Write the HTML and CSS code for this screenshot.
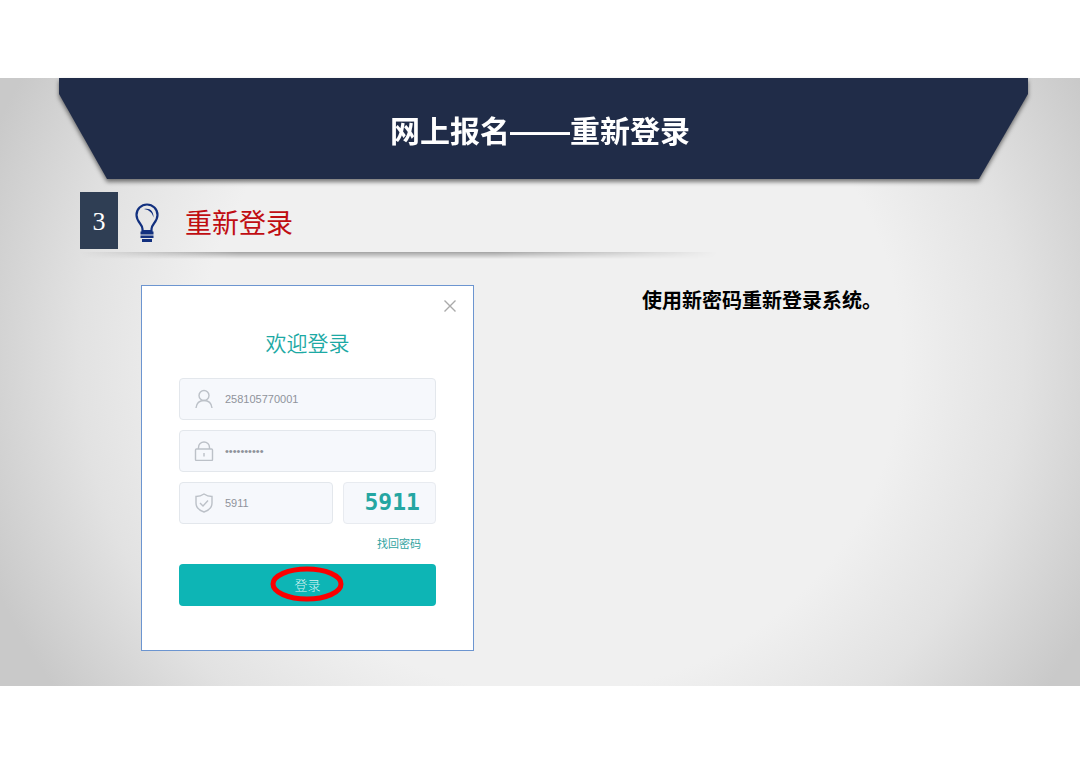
FILE: index.html
```html
<!DOCTYPE html>
<html lang="zh-CN">
<head>
  <meta charset="UTF-8" />
  <title>网上报名——重新登录</title>
  <meta name="viewport" content="width=device-width, initial-scale=1.0" />
  <link rel="stylesheet" href="styles.css">
</head>
<body>

  <main class="slide">
    <header class="banner-wrapper">
      <div class="banner">
        <h1>网上报名——重新登录</h1>
      </div>
    </header>

    <div class="section-header">
      <span class="step">3</span>
      <svg class="bulb" viewBox="0 0 24 40" aria-hidden="true">
        <path d="M7.500 28V26C7.500 21 1.500 19 1.500 12A10.500 10.500 0 0 1 22.500 12C22.500 19 16.500 21 16.500 26V28Z" fill="none" stroke="#12307f" stroke-width="2.200" />
        <path d="M9 6C14.500 4.500 19 8 18.500 14.500C17.500 10 14.500 7 9 6Z" fill="#12307f" />
        <path d="M5.500 28.500H18.500V31.500H5.500ZM5.500 32.500H18.500V35H5.500ZM7 36H17V39H7Z" fill="#12307f" />
      </svg>
      <h2>重新登录</h2>
    </div>
    <div class="divider"></div>

    <div class="content">
      <form class="login-box">
        <button type="button" class="close" aria-label="关闭">
          <svg viewBox="0 0 12 12" aria-hidden="true">
            <path d="M0.500 0.500L11.500 11.500M11.500 0.500L0.500 11.500" />
          </svg>
        </button>
        <h3>欢迎登录</h3>

        <div class="form-group">
          <label for="account" aria-label="账号">
            <svg viewBox="0 0 20 20" aria-hidden="true">
              <circle cx="10" cy="6.500" r="5" />
              <path d="M2 19C2.500 14.500 5.500 11.500 10 11.500S17.500 14.500 18 19" />
            </svg>
          </label>
          <input type="text" id="account" value="258105770001" />
        </div>

        <div class="form-group">
          <label for="password" aria-label="密码">
            <svg viewBox="0 0 20 20" aria-hidden="true">
              <rect x="1.500" y="8" width="17" height="11.500" rx="1" />
              <path d="M4.500 8V6.500A5.500 5.500 0 0 1 15.500 6.500V8M10 12V15.500" />
            </svg>
          </label>
          <input type="password" id="password" value="aaaaaaaaaa" />
        </div>

        <div class="code-row">
          <div class="form-group">
            <label for="code" aria-label="验证码">
              <svg viewBox="0 0 20 20" aria-hidden="true">
                <path d="M10 1C12.500 2.800 15 3.500 18 3.500V10C18 14.500 14.500 17.500 10 19C5.500 17.500 2 14.500 2 10V3.500C5 3.500 7.500 2.800 10 1Z" />
                <path d="M6 10L9 13L14 7.500" />
              </svg>
            </label>
            <input type="text" id="code" value="5911" />
          </div>
          <div class="captcha">5911</div>
        </div>

        <a href="#" class="forgot">找回密码</a>

        <button type="submit" class="submit">
          登录
          <svg class="mark" viewBox="0 0 74 36" aria-hidden="true">
            <ellipse cx="37" cy="18" rx="34" ry="15" />
          </svg>
        </button>
      </form>

      <p class="tip">使用新密码重新登录系统。</p>
    </div>
  </main>

</body>
</html>
```
FILE: styles.css
```css
* {
  box-sizing: border-box;
  margin: 0;
  padding: 0;
}

body {
  padding: 78px 0;
  background: #fff;
  font-family: "Liberation Sans", "Noto Sans CJK SC", sans-serif;
  color: #000;
}

.slide {
  padding-bottom: 35px;
  background: radial-gradient(ellipse 56% 95% at 51% 46%, #f0f0f0 0%, #f0f0f0 58%, #e2e2e2 78%, #c9c9c9 100%);
}

/* Banner */
.banner-wrapper {
  padding: 0 52px 0 59px;
  filter: drop-shadow(0 3px 2px rgba(0, 0, 0, 0.5));
}

.banner {
  height: 101px;
  padding: 32px 7px 0 0;
  background: #202c48;
  clip-path: polygon(0 0, 100% 0, 100% 16px, calc(100% - 49px) 100%, 48px 100%, 0 16px);
}

.banner h1 {
  font-size: 30px;
  line-height: 44px;
  font-weight: bold;
  text-align: center;
  color: #fff;
}

/* Section heading */
.section-header {
  display: flex;
  align-items: center;
  margin-top: 13px;
  padding-left: 80px;
}

.step {
  width: 38px;
  height: 57px;
  background: #2f3e54;
  color: #fff;
  font-family: "Liberation Serif", serif;
  font-size: 26px;
  line-height: 60px;
  text-align: center;
}

.bulb {
  width: 24px;
  height: 40px;
  margin: 4px 26px 0 17px;
}

.section-header h2 {
  padding-top: 6px;
  font-size: 27px;
  line-height: 40px;
  font-weight: normal;
  color: #c00d12;
}

.divider {
  width: 59%;
  height: 7px;
  margin: 3px 0 0 80px;
  background: linear-gradient(rgba(0, 0, 0, 0.32), rgba(0, 0, 0, 0));
  -webkit-mask-image: linear-gradient(to right, transparent, #000 25%, #000 65%, transparent);
  mask-image: linear-gradient(to right, transparent, #000 25%, #000 65%, transparent);
}

.content {
  display: flex;
  align-items: flex-start;
  padding: 26px 80px 0 141px;
}

/* Login box */
.login-box {
  position: relative;
  display: flex;
  flex-direction: column;
  gap: 10px;
  width: 333px;
  padding: 42px 37px 44px;
  background: #fff;
  border: 1px solid #6c95d0;
}

.login-box h3 {
  margin-bottom: 8px;
  font-size: 21px;
  line-height: 32px;
  font-weight: 350;
  text-align: center;
  color: #1ca9a4;
}

.close {
  position: absolute;
  top: 14px;
  right: 17px;
  width: 12px;
  height: 12px;
  border: none;
  background: none;
  cursor: pointer;
}

.close svg {
  display: block;
  stroke: #aaa;
  stroke-width: 1.4;
}

.form-group {
  display: flex;
  align-items: center;
  gap: 11px;
  height: 42px;
  padding: 0 14px;
  background: #f6f8fc;
  border: 1px solid #e3e7ec;
  border-radius: 4px;
}

.form-group svg {
  display: block;
  width: 20px;
  height: 20px;
  fill: none;
  stroke: #bcc1c8;
  stroke-width: 1.4;
}

.form-group input {
  flex: 1;
  min-width: 0;
  border: none;
  outline: none;
  background: none;
  font-family: "Liberation Sans", sans-serif;
  font-size: 11px;
  color: #8f939b;
}

.code-row {
  display: grid;
  grid-template-columns: minmax(0, 5fr) minmax(0, 3fr);
  gap: 10px;
}

.captcha {
  padding-left: 5px;
  background: #f6f8fc;
  border: 1px solid #e8ebf0;
  border-radius: 4px;
  font-family: "DejaVu Sans Mono", monospace;
  font-size: 23px;
  line-height: 38px;
  font-weight: bold;
  text-align: center;
  color: #25a6a2;
}

.forgot {
  align-self: flex-end;
  margin-right: 15px;
  font-size: 11px;
  line-height: 20px;
  text-decoration: none;
  color: #31a39f;
}

.submit {
  position: relative;
  height: 42px;
  padding-bottom: 2px;
  background: #0db5b5;
  border: none;
  border-radius: 4px;
  color: #d5f3f2;
  font-family: inherit;
  font-size: 13px;
  font-weight: 300;
  cursor: pointer;
}

/* Red ring round the button text */
.mark {
  position: absolute;
  top: 2px;
  left: calc(50% - 38px);
  width: 74px;
  height: 36px;
  fill: none;
  stroke: #fb0000;
  stroke-width: 5;
}

.tip {
  flex: 1;
  margin-left: 168px;
  font-size: 20px;
  line-height: 32px;
  font-weight: bold;
}

@media screen and (max-width: 900px) {
  .content {
    flex-wrap: wrap;
    gap: 24px;
    padding: 26px 40px 0;
  }

  .tip {
    margin-left: 0;
  }
}
```
